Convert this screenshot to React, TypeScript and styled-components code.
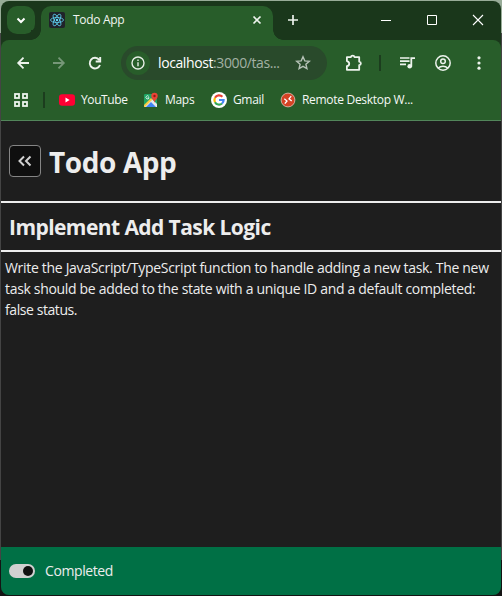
import React from "react";
import styled, { createGlobalStyle } from "styled-components";

const Global = createGlobalStyle`
  * { box-sizing: border-box; }
  html, body { margin: 0; height: 100%; overflow: hidden; }
  body {
    background: linear-gradient(#98ac98 0 33px, #444 33px 560px, #141414 560px);
    font-family: "Open Sans", "Noto Sans", sans-serif;
    color: #ededed;
  }
  svg { display: block; flex: none; }
`;

const Window = styled.div`
  width: 500px;
  height: 594px;
  margin: 1px;
  border-radius: 8px;
  overflow: hidden;
  display: flex;
  flex-direction: column;
  background: #1a371b;
`;

const TabStrip = styled.div`
  height: 39px;
  flex: none;
  display: flex;
  align-items: flex-start;
  padding: 5px 0 0 6px;
`;

const TabSearch = styled.button`
  width: 28px;
  height: 28px;
  padding: 0;
  border: 0;
  border-radius: 10px;
  background: #285d2a;
  color: #fff;
  display: grid;
  place-items: center;
`;

const Tab = styled.div`
  width: 232px;
  height: 34px;
  margin-left: 6px;
  padding: 0 11px 6px 8px;
  border-radius: 10px 10px 0 0;
  background: #285d2a;
  display: flex;
  align-items: center;
  position: relative;
  &::before, &::after {
    content: "";
    position: absolute;
    bottom: 0;
    width: 10px;
    height: 10px;
  }
  &::before { left: -10px; background: radial-gradient(circle at 0 0, #1a371b 9.5px, #285d2a 10px); }
  &::after { right: -10px; background: radial-gradient(circle at 100% 0, #1a371b 9.5px, #285d2a 10px); }
`;

const Favicon = styled.span`
  width: 16px;
  height: 16px;
  border-radius: 2px;
  background: #20232a;
`;

const Text = styled.span<{ $size?: number; $spacing?: number }>`
  font-size: ${(p) => p.$size ?? 12}px;
  letter-spacing: ${(p) => p.$spacing ?? 0}px;
  line-height: 18px;
  white-space: nowrap;
`;

const TabTitle = styled(Text)`
  flex: 1;
  margin-left: 8px;
  color: #f1f5f1;
`;

const NewTab = styled.span`
  margin: 9px 0 0 15px;
`;

const Controls = styled.div`
  margin: 8px 17px 0 auto;
  display: flex;
  gap: 34px;
`;

const Toolbar = styled.div`
  height: 46px;
  flex: none;
  background: #285d2a;
  border-radius: 8px 8px 0 0;
  display: flex;
  align-items: center;
  padding: 0 14px;
`;

const NavIcons = styled.div`
  display: flex;
  gap: 20px;
`;

const AddressBar = styled.div`
  width: 206px;
  height: 34px;
  margin-left: 18px;
  border-radius: 17px;
  background: #294a2b;
  display: flex;
  align-items: center;
  padding: 0 16px 0 5px;
`;

const SiteInfo = styled.span`
  width: 24px;
  height: 24px;
  border-radius: 50%;
  background: #285d2a;
  display: grid;
  place-items: center;
`;

const Url = styled(Text)`
  flex: 1;
  margin-left: 8px;
  color: #fff;
  span { color: #a3b1a4; }
`;

const ActionIcons = styled.div`
  margin-left: 18px;
  display: flex;
  align-items: center;
`;

const Divider = styled.i<{ $before: number; $after: number }>`
  width: 2px;
  height: 16px;
  background: #1c3d1e;
  margin-left: ${(p) => p.$before}px;
  margin-right: ${(p) => p.$after}px;
`;

const Spacer = styled.i<{ $w: number }>`
  width: ${(p) => p.$w}px;
`;

const Bookmarks = styled.div`
  height: 35px;
  flex: none;
  background: #285d2a;
  border-bottom: 1px solid #52855a;
  display: flex;
  align-items: center;
  padding: 0 0 6px 12px;
`;

const Bookmark = styled.a<{ $w: number; $gap?: number }>`
  width: ${(p) => p.$w}px;
  display: flex;
  align-items: center;
  gap: ${(p) => p.$gap ?? 6}px;
  color: #f5f8f5;
`;

const Page = styled.main`
  flex: 1;
  background: #1e1e1e;
  display: flex;
  flex-direction: column;
`;

const Header = styled.header`
  height: 82px;
  border-bottom: 2px solid #ededed;
  padding-left: 8px;
  display: flex;
  align-items: center;
  gap: 8px;
`;

const BackButton = styled.button`
  width: 32px;
  height: 32px;
  padding: 0;
  border: 1px solid #858585;
  border-radius: 4px;
  background: #0f0f0f;
  color: #d2d2d2;
  display: grid;
  place-items: center;
`;

const AppTitle = styled.h1`
  margin: 2px 0 0;
  font-size: 28px;
  line-height: 40px;
  letter-spacing: -0.4px;
  font-weight: 700;
`;

const TaskTitle = styled.h2`
  height: 49px;
  margin: 0;
  padding-left: 8px;
  border-bottom: 2px solid #ededed;
  font-size: 21px;
  line-height: 48px;
  letter-spacing: -0.57px;
  font-weight: 700;
`;

const Description = styled.p`
  flex: 1;
  margin: 0;
  padding: 5px 4px;
  font-size: 14px;
  line-height: 21px;
`;

const Line = styled.span<{ $spacing: number }>`
  display: block;
  white-space: nowrap;
  letter-spacing: ${(p) => p.$spacing}px;
`;

const Footer = styled.footer`
  height: 48px;
  background: #007045;
  display: flex;
  align-items: center;
  padding-left: 8px;
  gap: 10px;
`;

const Switch = styled.span`
  width: 26px;
  height: 14px;
  padding: 2px;
  border-radius: 7px;
  background: #d0d0d0;
  display: flex;
  justify-content: flex-end;
`;

const Knob = styled.span`
  width: 10px;
  height: 10px;
  border-radius: 50%;
  background: #101010;
`;

const stroke = (d: string, size = 16, width = 1.7, color = "#edf3ed") => (
  <svg width={size} height={size} viewBox={`0 0 ${size} ${size}`} fill="none" stroke={color} strokeWidth={width}>
    <path d={d} />
  </svg>
);

const ReactLogo = () => (
  <svg width="16" height="16" viewBox="0 0 16 16" fill="none" stroke="#61dafb" strokeWidth=".75">
    {[30, 90, 150].map((a) => (
      <ellipse key={a} cx="8" cy="8" rx="6.5" ry="2.5" transform={`rotate(${a - 30} 8 8)`} />
    ))}
    <circle cx="8" cy="8" r="1.2" fill="#61dafb" stroke="none" />
  </svg>
);

const InfoIcon = () => (
  <svg width="14" height="14" viewBox="0 0 14 14" fill="none" stroke="#e6eee6" strokeWidth="1.4">
    <circle cx="7" cy="7" r="6" />
    <path d="M7 6.2V10.3M7 3.5V5" />
  </svg>
);

const ExtensionIcon = () => (
  <svg width="18" height="18" viewBox="0 0 18 18">
    <path d="M1.9 3.2H5.9C6.2 1.2 9.2 1.2 9.5 3.2H14.2V7.7C16.4 8 16.4 10.8 14.2 11.1V15.8H1.9V12.2C5 11.4 5 7.9 1.9 7.1Z" fill="none" stroke="#edf3ed" strokeWidth="1.8" strokeLinejoin="round" />
  </svg>
);

const PlaylistIcon = () => (
  <svg width="16" height="14" viewBox="0 0 16 14">
    <path d="M0 2H9.5M0 5.2H9.5M0 8.4H6" stroke="#edf3ed" strokeWidth="1.7" />
    <circle cx="9.7" cy="10.2" r="2.3" fill="#edf3ed" />
    <path d="M11.3 10.2V2.1H15" fill="none" stroke="#edf3ed" strokeWidth="1.8" />
  </svg>
);

const ProfileIcon = () => (
  <svg width="16" height="16" viewBox="0 0 16 16" fill="none" stroke="#edf3ed" strokeWidth="1.5">
    <circle cx="8" cy="8" r="7.2" />
    <circle cx="8" cy="6.3" r="2.3" />
    <path d="M3.3 13C5.8 10.5 10.2 10.5 12.7 13" />
  </svg>
);

const MenuIcon = () => (
  <svg width="4" height="14" viewBox="0 0 4 14" fill="#edf3ed">
    {[1.8, 7, 12.2].map((y) => <circle key={y} cx="2" cy={y} r="1.6" />)}
  </svg>
);

const YouTubeIcon = () => (
  <svg width="16" height="16" viewBox="0 0 16 16">
    <rect y="2.3" width="16" height="11.4" rx="3" fill="#ff0033" />
    <path d="M6.5 5.6L10.6 8L6.5 10.4Z" fill="#fff" />
  </svg>
);

const MapsIcon = () => (
  <svg width="16" height="16" viewBox="0 0 16 16">
    <rect x="1" y="2" width="13" height="13" rx="1.2" fill="#1fa463" />
    <path d="M1 15L9 7L14 12V15Z" fill="#e8eaed" />
    <path d="M3 15L8 10L13 15Z" fill="#4285f4" />
    <path d="M1 13L8 6L9.5 7.5L2 15H1Z" fill="#fbcb43" />
    <path d="M5.8 4.4A1.6 1.6 0 1 0 6.1 5.8H4.6" stroke="#fff" strokeWidth=".8" fill="none" />
    <path d="M11.5 11C11.3 8 8.3 6.8 8.3 4A3.2 3.2 0 0 1 14.7 4C14.7 6.8 11.7 8 11.5 11Z" fill="#e94335" />
    <circle cx="11.5" cy="4" r="1.2" fill="#8b1c16" />
  </svg>
);

const GoogleIcon = () => (
  <svg width="16" height="16" viewBox="0 0 16 16" fill="none" strokeWidth="2.2">
    <circle cx="8" cy="8" r="8" fill="#fff" />
    <path d="M11.4 4.8A4.6 4.6 0 0 0 4 5.8" stroke="#ea4335" />
    <path d="M4 5.8A4.6 4.6 0 0 0 4 10.2" stroke="#fbbc05" />
    <path d="M4 10.2A4.6 4.6 0 0 0 11 11.5" stroke="#34a853" />
    <path d="M11 11.5A4.6 4.6 0 0 0 12.6 8H8" stroke="#4285f4" />
  </svg>
);

const RemoteIcon = () => (
  <svg width="16" height="16" viewBox="0 0 16 16">
    <circle cx="8" cy="8" r="6.9" fill="#d54325" stroke="#d9b8aa" strokeWidth=".9" />
    <path d="M4.3 6.8L7 9L4.8 11.6M11.2 4.2L9 6.8L11.7 9" fill="none" stroke="#fff" strokeWidth="1.3" />
  </svg>
);

const AppsIcon = () => (
  <svg width="16" height="16" viewBox="0 0 16 16" fill="none" stroke="#edf3ed" strokeWidth="1.8">
    {[[2, 2], [10, 2], [2, 10], [10, 10]].map(([x, y]) => (
      <rect key={`${x}-${y}`} x={x} y={y} width="4" height="4" />
    ))}
  </svg>
);

export default function App() {
  return (
    <>
      <Global />
      <Window>
        <TabStrip>
          <TabSearch>{stroke("M4.5 6.5L8 10L11.5 6.5", 16, 2, "#fff")}</TabSearch>
          <Tab>
            <Favicon><ReactLogo /></Favicon>
            <TabTitle $spacing={-0.3}>Todo App</TabTitle>
            {stroke("M1.5 1.5L8.5 8.5M8.5 1.5L1.5 8.5", 10, 1.7)}
          </Tab>
          <NewTab>{stroke("M5 0V10M0 5H10", 10, 1.7)}</NewTab>
          <Controls>
            {stroke("M1 6.5H11", 12, 1, "#fff")}
            {stroke("M1.5 1.5H10.5V10.5H1.5Z", 12, 1, "#fff")}
            {stroke("M1 1L11 11M11 1L1 11", 12, 1.1, "#fff")}
          </Controls>
        </TabStrip>
        <Toolbar>
          <NavIcons>
            {stroke("M14 8H3.2M8.5 2.7L3.2 8L8.5 13.3", 16, 1.8)}
            {stroke("M2 8H12.8M7.5 2.7L12.8 8L7.5 13.3", 16, 1.8, "#769778")}
            {stroke("M13 10A5.3 5.3 0 1 1 12.2 4.8M13.2 2V6.5H8.7", 16, 1.9)}
          </NavIcons>
          <AddressBar>
            <SiteInfo><InfoIcon /></SiteInfo>
            <Url $size={14} $spacing={-0.4}>localhost<span>:3000/tas...</span></Url>
            {stroke("M8 1.8L9.8 5.9L14.3 6.3L10.9 9.2L11.9 13.6L8 11.3L4.1 13.6L5.1 9.2L1.7 6.3L6.2 5.9Z", 16, 1.4, "#b5c1b6")}
          </AddressBar>
          <ActionIcons>
            <ExtensionIcon />
            <Divider $before={16} $after={19} />
            <PlaylistIcon />
            <Spacer $w={19} />
            <ProfileIcon />
            <Spacer $w={26} />
            <MenuIcon />
          </ActionIcons>
        </Toolbar>
        <Bookmarks>
          <AppsIcon />
          <Divider $before={14} $after={14} />
          <Bookmark $w={84}><YouTubeIcon /><Text $spacing={-0.4}>YouTube</Text></Bookmark>
          <Bookmark $w={68}><MapsIcon /><Text $spacing={-0.3}>Maps</Text></Bookmark>
          <Bookmark $w={69}><GoogleIcon /><Text $spacing={-0.35}>Gmail</Text></Bookmark>
          <Bookmark $w={140}><RemoteIcon /><Text $spacing={-0.3}>Remote Desktop W...</Text></Bookmark>
        </Bookmarks>
        <Page>
          <Header>
            <BackButton>{stroke("M7 3.5L2.5 8L7 12.5M13.5 3.5L9 8L13.5 12.5", 16, 2, "#d2d2d2")}</BackButton>
            <AppTitle>Todo App</AppTitle>
          </Header>
          <TaskTitle>Implement Add Task Logic</TaskTitle>
          <Description>
            <Line $spacing={-0.31}>Write the JavaScript/TypeScript function to handle adding a new task. The new</Line>
            <Line $spacing={-0.32}>task should be added to the state with a unique ID and a default completed:</Line>
            <Line $spacing={-0.42}>false status.</Line>
          </Description>
          <Footer>
            <Switch><Knob /></Switch>
            <Text $size={14} $spacing={-0.4}>Completed</Text>
          </Footer>
        </Page>
      </Window>
    </>
  );
}
